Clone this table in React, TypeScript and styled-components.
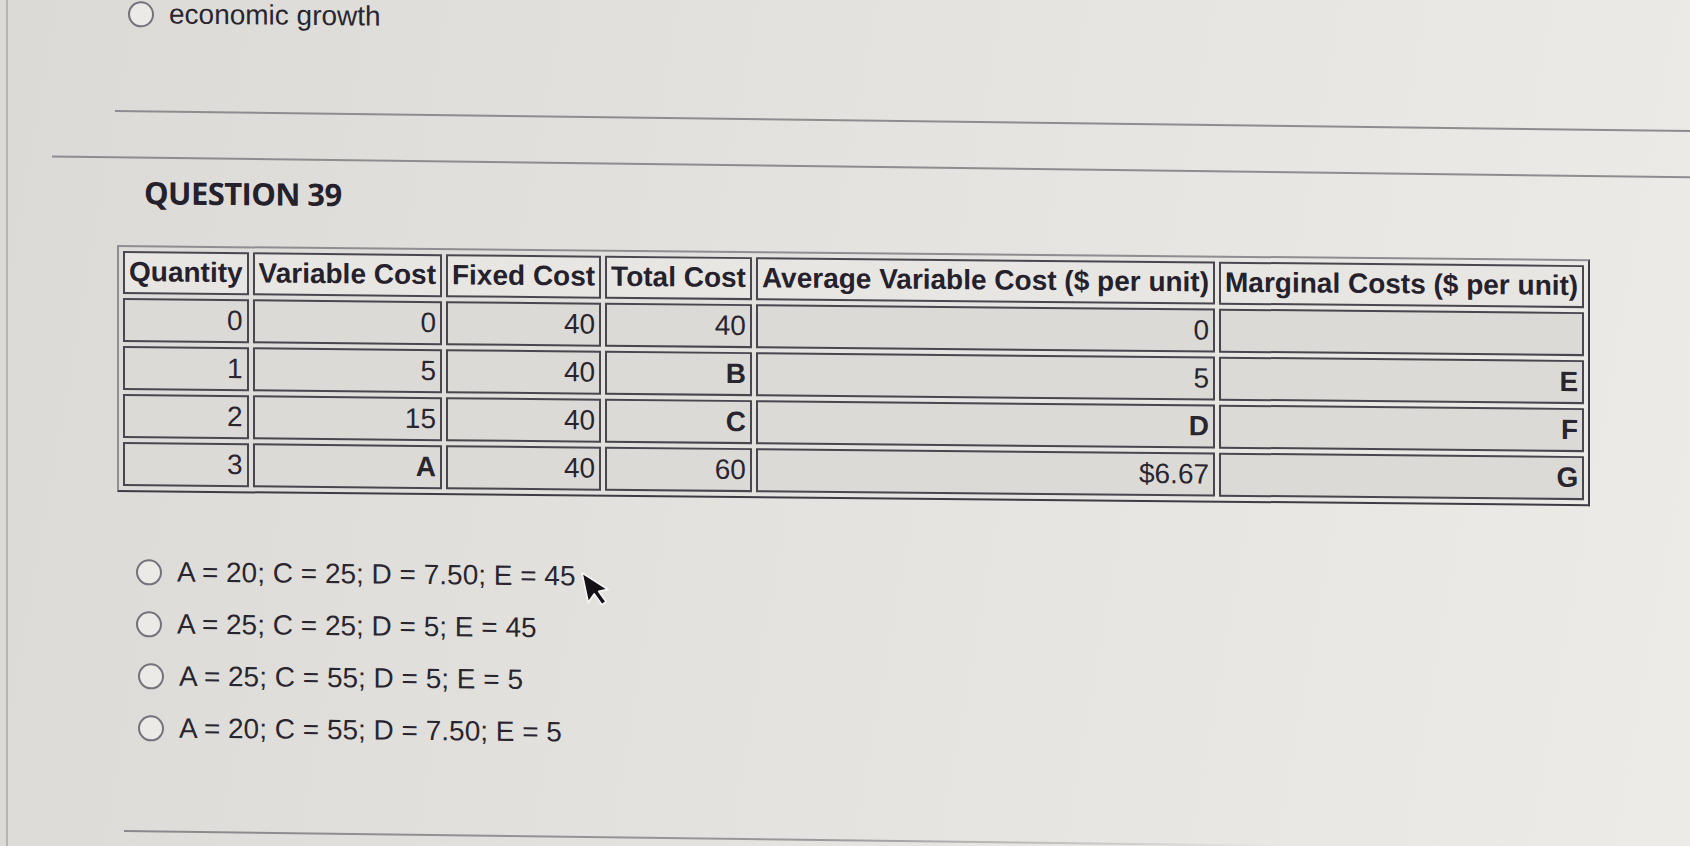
import styled, { createGlobalStyle } from "styled-components";

const GlobalStyle = createGlobalStyle`
  html, body {
    margin: 0;
    padding: 0;
  }
  body {
    background: linear-gradient(100deg, #dcdad6 0%, #e4e2de 45%, #ecebe8 100%);
    font-family: "Liberation Sans", Arial, sans-serif;
    color: #26222c;
  }
`;

const Page = styled.div`
  display: flex;
  width: 1690px;
  height: 846px;
  overflow: hidden;
`;

const Gutter = styled.div`
  width: 6px;
  flex: none;
  border-right: 2px solid #b7b5b2;
  background: #dcdad6;
`;

const Sheet = styled.div`
  position: relative;
  flex: 1;
  display: flex;
  flex-direction: column;
  align-items: flex-start;
  transform: skewY(0.55deg);
  transform-origin: 0 0;
`;

const OptionRow = styled.label<{ $left: number; $top: number }>`
  display: flex;
  align-items: center;
  gap: 15px;
  margin-left: ${(p) => p.$left}px;
  margin-top: ${(p) => p.$top}px;
  height: 28px;
  font-size: 28px;
  line-height: 28px;
  color: #29252f;
  white-space: nowrap;
`;

const Radio = styled.span`
  width: 22px;
  height: 22px;
  border: 2px solid #74727a;
  border-radius: 50%;
  background: #eceae7;
  flex: none;
`;

const Divider = styled.div<{ $left: number; $top: number; $width?: number }>`
  margin-left: ${(p) => p.$left}px;
  margin-top: ${(p) => p.$top}px;
  width: ${(p) => (p.$width ? `${p.$width}px` : "1800px")};
  height: 2px;
  background: #8e8c90;
  transform: rotate(0.18deg);
  transform-origin: 0 0;
`;

const FadingLine = styled(Divider)`
  background: linear-gradient(90deg, #8a888c 0%, #9a989b 60%, rgba(160, 158, 160, 0) 100%);
`;

const Title = styled.h2`
  margin: 16px 0 0 136px;
  font-family: "Open Sans", "Noto Sans", sans-serif;
  font-weight: 700;
  font-size: 31px;
  line-height: 36px;
  letter-spacing: -0.6px;
  color: #25212c;
`;

const CostTable = styled.table`
  margin: 35px 0 0 109px;
  border-collapse: separate;
  border-spacing: 4px;
  border-style: solid;
  border-width: 2px;
  border-color: #8f8d92 #3f3b45 #3f3b45 #8f8d92;
  font-size: 28px;
  line-height: 32px;
`;

const HeadCell = styled.th`
  box-sizing: border-box;
  height: 43px;
  padding: 3px 4px 0;
  border: 2px solid #4a4650;
  background: #e8e6e3;
  font-weight: 700;
  text-align: center;
  vertical-align: top;
  white-space: nowrap;
  color: #25212c;
`;

const Cell = styled.td<{ $bold?: boolean }>`
  box-sizing: border-box;
  height: 44px;
  padding: 4px 4px 0;
  border: 2px solid #4a4650;
  background: #dcdad6;
  text-align: right;
  vertical-align: top;
  white-space: nowrap;
  font-weight: ${(p) => (p.$bold ? 700 : 400)};
  color: #29252f;
`;

const Cursor = styled.svg`
  position: absolute;
  left: 576px;
  top: 563px;
  width: 25px;
  height: 39px;
  transform: rotate(-12deg);
`;

const headers = [
  "Quantity",
  "Variable Cost",
  "Fixed Cost",
  "Total Cost",
  "Average Variable Cost ($ per unit)",
  "Marginal Costs ($ per unit)",
];

const rows = [
  ["0", "0", "40", "40", "0", ""],
  ["1", "5", "40", "B", "5", "E"],
  ["2", "15", "40", "C", "D", "F"],
  ["3", "A", "40", "60", "$6.67", "G"],
];

const answers = [
  "A = 20; C = 25; D = 7.50; E = 45",
  "A = 25; C = 25; D = 5; E = 45",
  "A = 25; C = 55; D = 5; E = 5",
  "A = 20; C = 55; D = 7.50; E = 5",
];

const isLetter = (v: string) => /^[A-G]$/.test(v);

const App = () => {
  return (
    <>
      <GlobalStyle />
      <Page>
        <Gutter />
        <Sheet>
          <OptionRow $left={120} $top={-1}>
            <Radio />
            economic growth
          </OptionRow>

          <Divider $left={107} $top={82} />
          <Divider $left={44} $top={44} />

          <Title>QUESTION 39</Title>

          <CostTable>
            <thead>
              <tr>
                {headers.map((h) => (
                  <HeadCell key={h}>{h}</HeadCell>
                ))}
              </tr>
            </thead>
            <tbody>
              {rows.map((r, i) => (
                <tr key={i}>
                  {r.map((v, j) => (
                    <Cell key={j} $bold={isLetter(v)}>
                      {v}
                    </Cell>
                  ))}
                </tr>
              ))}
            </tbody>
          </CostTable>

          {answers.map((a, i) => (
            <OptionRow key={a} $left={128 + (i > 1 ? 2 : 0)} $top={i === 0 ? 66 : 24}>
              <Radio />
              {a}
            </OptionRow>
          ))}

          <FadingLine $left={116} $top={88} $width={1150} />

          <Cursor viewBox="0 0 18 28">
            <path
              d="M1 1 L1 23 L6.5 17.8 L10.3 26.5 L13.8 25 L10.1 16.6 L17 16.6 Z"
              fill="#141216"
              stroke="#f4f4f4"
              strokeWidth="1.3"
              strokeLinejoin="round"
            />
          </Cursor>
        </Sheet>
      </Page>
    </>
  );
};

export default App;
